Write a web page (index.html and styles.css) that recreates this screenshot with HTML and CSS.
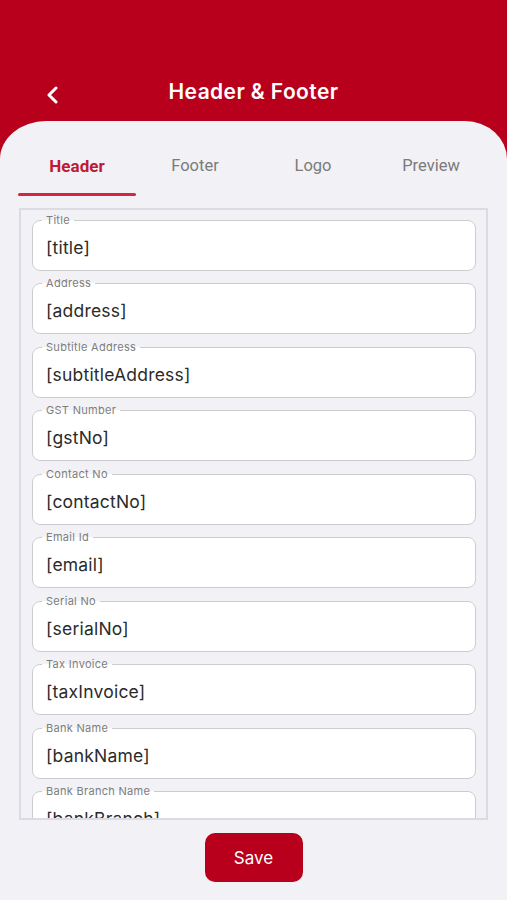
FILE: index.html
```html
<!DOCTYPE html>
<html>
<head>
<meta charset="utf-8">
<link rel="stylesheet" href="styles.css">
</head>
<body>
<div class="app">
  <header class="topbar">
    <span class="back">
      <svg width="14" height="18" viewBox="0 0 14 18"><polyline points="11,2 4,9 11,16" fill="none" stroke="#fff" stroke-width="3" stroke-linecap="round" stroke-linejoin="round"/></svg>
    </span>
    <h1 class="title">Header &amp; Footer</h1>
  </header>
  <main class="sheet">
    <nav class="tabs">
      <div class="tab active">Header</div>
      <div class="tab">Footer</div>
      <div class="tab">Logo</div>
      <div class="tab">Preview</div>
    </nav>
    <section class="form">
      <fieldset class="field"><legend>Title</legend><div class="value">[title]</div></fieldset>
      <fieldset class="field"><legend>Address</legend><div class="value">[address]</div></fieldset>
      <fieldset class="field"><legend>Subtitle Address</legend><div class="value">[subtitleAddress]</div></fieldset>
      <fieldset class="field"><legend>GST Number</legend><div class="value">[gstNo]</div></fieldset>
      <fieldset class="field"><legend>Contact No</legend><div class="value">[contactNo]</div></fieldset>
      <fieldset class="field"><legend>Email Id</legend><div class="value">[email]</div></fieldset>
      <fieldset class="field"><legend>Serial No</legend><div class="value">[serialNo]</div></fieldset>
      <fieldset class="field"><legend>Tax Invoice</legend><div class="value">[taxInvoice]</div></fieldset>
      <fieldset class="field"><legend>Bank Name</legend><div class="value">[bankName]</div></fieldset>
      <fieldset class="field"><legend>Bank Branch Name</legend><div class="value">[bankBranch]</div></fieldset>
    </section>
    <div class="actions">
      <button class="save">Save</button>
    </div>
  </main>
</div>
</body>
</html>
```

FILE: styles.css
```css
* { box-sizing: border-box; }
html, body { margin: 0; padding: 0; }
body {
  width: 507px;
  height: 900px;
  overflow: hidden;
  background: #b8001c;
  font-family: Inter, "Noto Sans", sans-serif;
}
.app {
  display: flex;
  flex-direction: column;
  height: 900px;
}
.topbar {
  height: 121px;
  position: relative;
  display: flex;
  align-items: flex-start;
  justify-content: center;
  padding-top: 78px;
}
.back {
  position: absolute;
  left: 45px;
  top: 86px;
  width: 14px;
  height: 18px;
  display: block;
}
.back svg { display: block; }
.title {
  margin: 0;
  color: #fff;
  font-size: 21px;
  line-height: 27px;
  font-weight: 600;
  letter-spacing: 0.4px;
}
.sheet {
  flex: 1;
  background: #f2f1f6;
  border-radius: 46px 42px 0 0 / 38px 38px 0 0;
  display: flex;
  flex-direction: column;
}
.tabs {
  display: grid;
  grid-template-columns: repeat(4, 1fr);
  margin: 0 17px 0 18px;
  height: 75px;
}
.tab {
  padding-top: 35px;
  text-align: center;
  font-family: Roboto, "Noto Sans", sans-serif;
  font-size: 16.5px;
  line-height: 20px;
  color: #7b7b7b;
  font-weight: 400;
  position: relative;
}
.tab.active {
  color: #c01a34;
  font-weight: 700;
  font-size: 17px;
}
.tab.active::after {
  content: "";
  position: absolute;
  left: 0;
  right: 0;
  bottom: 0;
  height: 3px;
  border-radius: 2px;
  background: #d6253f;
}
.form {
  margin: 12px 19px 0 19px;
  height: 612px;
  border: 2px solid #dcdbe3;
  overflow: hidden;
  padding: 3.5px 10px 0 11px;
  display: flex;
  flex-direction: column;
  gap: 6.5px;
}
.field {
  margin: 0;
  flex: none;
  border: 1.5px solid #cbcbd0;
  border-radius: 8px;
  background: #fff;
  padding: 0 13px;
}
.field legend {
  font-size: 11px;
  line-height: 13px;
  color: #7d7d7d;
  padding: 0 4px;
  margin-left: -4px;
  letter-spacing: 0.3px;
}
.value {
  font-size: 17.5px;
  line-height: 22px;
  color: #2b2b2b;
  padding: 10px 0 11px;
  white-space: nowrap;
  letter-spacing: 0.2px;
}
.actions {
  display: flex;
  justify-content: center;
  padding-top: 13px;
}
.save {
  width: 98px;
  height: 49px;
  background: #b8001c;
  color: #fff;
  border: none;
  border-radius: 10px;
  font-family: Inter, "Noto Sans", sans-serif;
  font-size: 17px;
  font-weight: 400;
}
```
